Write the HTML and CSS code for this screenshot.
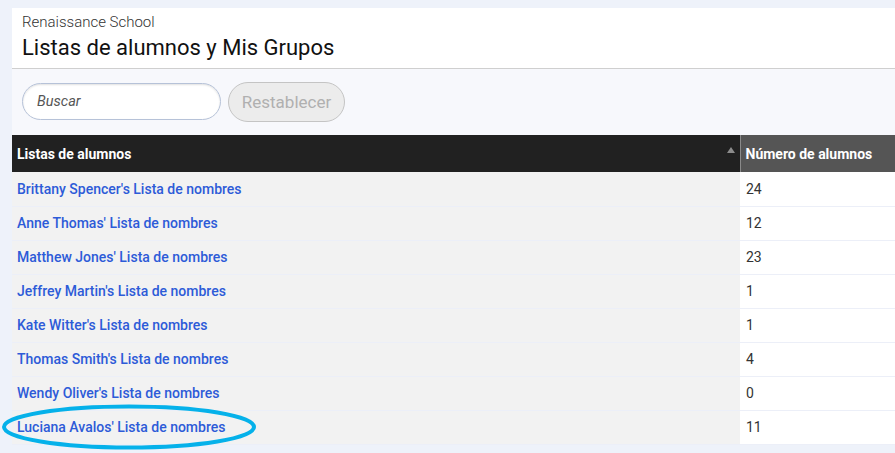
FILE: index.html
```html
<!DOCTYPE html>
<html lang="es">
<head>
<meta charset="utf-8">
<title>Listas de alumnos y Mis Grupos</title>
<link rel="stylesheet" href="styles.css">
</head>
<body>
<div class="page">
  <div class="card">
    <header class="head">
      <div class="school">Renaissance School</div>
      <h1 class="title">Listas de alumnos y Mis Grupos</h1>
    </header>
    <div class="toolbar">
      <input class="search" type="text" placeholder="Buscar">
      <button class="reset" type="button">Restablecer</button>
    </div>
    <table class="grid">
      <thead>
        <tr>
          <th class="c-name">Listas de alumnos<span class="sort"></span></th>
          <th class="c-num">Número de alumnos</th>
        </tr>
      </thead>
      <tbody>
        <tr><td class="c-name"><a href="#">Brittany Spencer's Lista de nombres</a></td><td class="c-num">24</td></tr>
        <tr><td class="c-name"><a href="#">Anne Thomas' Lista de nombres</a></td><td class="c-num">12</td></tr>
        <tr><td class="c-name"><a href="#">Matthew Jones' Lista de nombres</a></td><td class="c-num">23</td></tr>
        <tr><td class="c-name"><a href="#">Jeffrey Martin's Lista de nombres</a></td><td class="c-num">1</td></tr>
        <tr><td class="c-name"><a href="#">Kate Witter's Lista de nombres</a></td><td class="c-num">1</td></tr>
        <tr><td class="c-name"><a href="#">Thomas Smith's Lista de nombres</a></td><td class="c-num">4</td></tr>
        <tr><td class="c-name"><a href="#">Wendy Oliver's Lista de nombres</a></td><td class="c-num">0</td></tr>
        <tr><td class="c-name"><a href="#">Luciana Avalos' Lista de nombres</a></td><td class="c-num">11</td></tr>
      </tbody>
    </table>
  </div>
  <svg class="circle" width="262" height="52" viewBox="0 0 262 52" aria-hidden="true">
    <ellipse cx="129" cy="25" rx="125" ry="20.5" fill="none" stroke="#05b1ea" stroke-width="4"/>
  </svg>
</div>
</body>
</html>
```
FILE: styles.css
```css
html, body {
  margin: 0;
  padding: 0;
  background: #eef2fa;
  font-family: Roboto, "Open Sans", Arial, sans-serif;
  overflow: hidden;
}
.page {
  position: relative;
  width: 895px;
  height: 453px;
  padding: 8px 0 0 12px;
  box-sizing: border-box;
}
.card {
  width: 900px;
  background: #f7f8fc;
}
.head {
  background: #fff;
  padding: 6px 10px 8px;
  border-bottom: 1px solid #cfcfcf;
  height: 46px;
}
.school {
  font-size: 15px;
  font-weight: 300;
  color: #333;
  line-height: 17px;
}
.title {
  margin: 4px 0 0;
  font-size: 22px;
  font-weight: 400;
  color: #111;
  line-height: 26px;
}
.toolbar {
  display: flex;
  align-items: flex-start;
  gap: 7px;
  padding: 13px 10px 0;
  height: 53px;
}
.search {
  box-sizing: border-box;
  width: 199px;
  height: 37px;
  margin-top: 1px;
  border: 1px solid #b6c2d8;
  border-radius: 19px;
  background: #fff;
  box-shadow: inset 0 1px 2px rgba(0,0,0,0.12);
  padding: 0 14px;
  font-family: Roboto, Arial, sans-serif;
  font-size: 14.5px;
  font-style: italic;
  outline: none;
}
.search::placeholder {
  color: #555;
  font-style: italic;
}
.reset {
  box-sizing: border-box;
  width: 117px;
  height: 40px;
  border: 1px solid #c4c4c4;
  border-radius: 20px;
  background: #ececec;
  color: #b0b0b0;
  font-family: Roboto, Arial, sans-serif;
  font-size: 17px;
  padding: 0;
}
.grid {
  border-collapse: collapse;
  table-layout: fixed;
  width: 900px;
}
.grid th {
  height: 37px;
  padding: 0 5px;
  text-align: left;
  font-size: 14px;
  font-weight: 700;
  color: #fff;
  box-sizing: border-box;
}
.grid th.c-name {
  width: 728px;
  background: #212121;
  position: relative;
}
.grid th.c-num {
  background: #555;
  border-left: 1px solid #8a8a8a;
  padding-left: 5px;
}
.sort {
  position: absolute;
  right: 5px;
  top: 12px;
  width: 0;
  height: 0;
  border-left: 4px solid transparent;
  border-right: 4px solid transparent;
  border-bottom: 6px solid #8c8c8c;
}
.grid td {
  height: 34px;
  padding: 0 5px;
  font-size: 14px;
  box-sizing: border-box;
  border-bottom: 1px solid #eceff8;
}
.grid td.c-name {
  background: #f2f2f2;
}
.grid td.c-num {
  background: #fff;
  color: #333;
  padding-left: 6px;
}
.grid a {
  color: #2d5bd8;
  text-decoration: none;
  font-weight: 500;
}
.circle {
  position: absolute;
  left: 0;
  top: 402px;
}
```
